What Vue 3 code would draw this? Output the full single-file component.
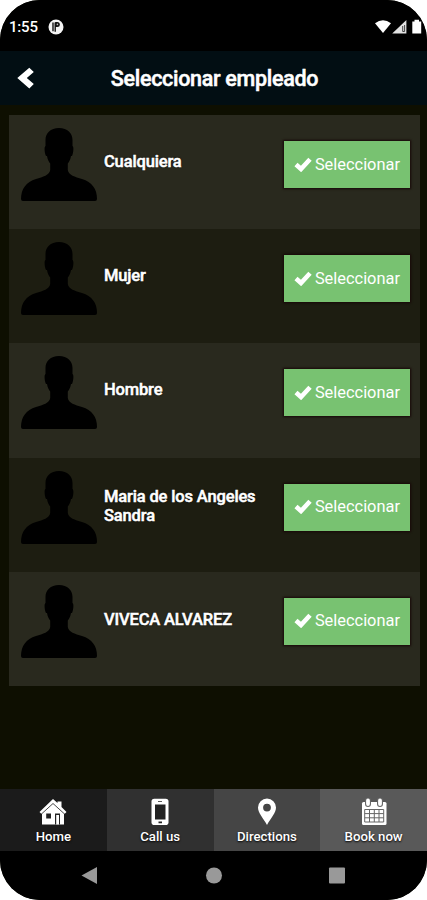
<script setup>
const employees = ['Cualquiera', 'Mujer', 'Hombre', 'Maria de los Angeles Sandra', 'VIVECA ALVAREZ']
const tabs = [
  { id: 'home', label: 'Home' },
  { id: 'call', label: 'Call us' },
  { id: 'directions', label: 'Directions' },
  { id: 'book', label: 'Book now' },
]
</script>

<template>
  <div class="phone">
    <div class="status">
      <span class="clock">1:55</span>
      <svg class="app-dot" viewBox="0 0 16 16">
        <circle cx="8" cy="8" r="7.5" fill="#f4f4f4" />
        <path d="M5 3.6V12.2M7.2 12.8V3.6" fill="none" stroke="#000" stroke-width="1.3" />
        <path d="M7.2 3H9.300A2.500 2.500 0 0 1 9.300 8H7.200Z" fill="#111" />
        <circle cx="9.400" cy="5.400" r=".8" fill="#bbb" />
      </svg>
      <svg class="signals" viewBox="0 0 48 16">
        <path d="M0 4.2Q8 -1.8 16 4.2L8 14Z" fill="#fff" />
        <path d="M17.2 14.6L31.4 1V14.6Z" fill="#e2e2e2" />
        <path d="M27.7 7v5.500H29.600V6" fill="none" stroke="#444" stroke-width="1" />
        <path d="M37.3 2.6H39.5V.8H44V2.6H46.2V14.6H37.3Z" fill="#fff" />
      </svg>
    </div>

    <header class="header">
      <svg class="back" viewBox="0 0 18 22">
        <path d="M0.300 11L12.300 0.800L16.800 5L9.800 11L16.800 17L12.300 21.500Z" fill="#fff" />
      </svg>
      <h1>Seleccionar empleado</h1>
    </header>

    <main class="content">
      <ul class="list">
        <li v-for="name in employees" :key="name" class="row">
          <svg class="avatar" viewBox="0 0 76 73">
            <path d="M38 0C46.500 0 51.500 5 51.500 12V18C53 18.500 52.500 25 51 28H50C49.500 31.500 48 34 46.800 35.500V42C47.500 47 54 49 61 51C71 54 76 61 76 71Q76 73 74 73H2Q0 73 0 71C0 61 5 54 15 51C22 49 28.500 47 29.200 42V35.500C28 34 26.500 31.500 26 28H25C23.500 25 23 18.500 24.500 18V12C24.500 5 29.500 0 38 0Z" fill="#000" />
          </svg>
          <div class="name">{{ name }}</div>
          <button class="select">
            <svg class="check" viewBox="0 0 18 15">
              <path d="M2 7.500L7 12L16 2.300" fill="none" stroke="#fff" stroke-width="4.600" />
            </svg>
            <span>Seleccionar</span>
          </button>
        </li>
      </ul>
    </main>

    <nav class="tabs">
      <a v-for="tab in tabs" :key="tab.id" class="tab" :class="tab.id">
        <svg v-if="tab.id === 'home'" class="icon" viewBox="0 0 28 28">
          <path d="M0.500 14L14 1L18.500 5V3.500H22.500V9L27.500 14L26 15.500H25V26.500H3V15.500H2Z" fill="#fff" />
          <path d="M3 15.500L14 5.500L25 15.500" fill="none" stroke="#333" stroke-width=".9" />
          <path d="M7.200 15.500H12V20.500H7.200ZM16 15.500H21V26.500H16Z" fill="#222" />
          <path d="M17.200 17H20V26.500H17.200Z" fill="#fff" />
        </svg>
        <svg v-else-if="tab.id === 'call'" class="icon" viewBox="0 0 28 28">
          <rect x="5.500" y="0.700" width="17" height="26.300" rx="2.800" fill="#fff" />
          <path d="M9 6.500H19.500V21.500H9ZM12.500 23.500H16V25.200H12.500ZM12 3H16V3.700H12Z" fill="#222" />
        </svg>
        <svg v-else-if="tab.id === 'directions'" class="icon" viewBox="0 0 28 28">
          <path fill-rule="evenodd" d="M14 .6A9 9 0 0 0 5 9.600C5 15 10 20 14 27C18 20 23 15 23 9.600A9 9 0 0 0 14 .6ZM14 5.700A3.900 3.900 0 1 1 14 13.500A3.900 3.900 0 1 1 14 5.700Z" fill="#fff" />
        </svg>
        <svg v-else class="icon" viewBox="0 0 28 28">
          <rect x="2" y="4" width="24.500" height="23" rx="1.500" fill="#fff" />
          <path d="M8 2.500V6M20 2.500V6" stroke="#666" stroke-width="6" stroke-linecap="round" />
          <path d="M8 2.500V6M20 2.500V6" stroke="#fff" stroke-width="3.800" stroke-linecap="round" />
          <path d="M4.700 11.500H23.700V24H4.700ZM4.700 15.600H23.700M4.700 19.800H23.700M9.500 11.500V24M14.300 11.500V24M19 11.500V24" fill="none" stroke="#666" stroke-width="1" />
        </svg>
        <span>{{ tab.label }}</span>
      </a>
    </nav>

    <div class="system">
      <svg viewBox="0 0 427 49">
        <path d="M81.500 24.500L97 16V33Z" fill="#999" />
        <circle cx="214" cy="24.500" r="8" fill="#999" />
        <rect x="329" y="16.500" width="16" height="16" rx="1" fill="#999" />
      </svg>
    </div>
  </div>
</template>

<style>
body {
  background: #fff;
}
</style>

<style scoped>
.phone {
  width: 427px;
  height: 900px;
  display: flex;
  flex-direction: column;
  overflow: hidden;
  border-radius: 40px;
  background: #0e0f01;
  color: #fff;
  font-family: Roboto, sans-serif;
}
.status {
  height: 51px;
  box-sizing: border-box;
  padding: 2px 4px 0 9px;
  display: flex;
  align-items: center;
  background: #000;
}
.clock {
  width: 39px;
  font-size: 15px;
  font-weight: 500;
  letter-spacing: -0.2px;
}
.app-dot {
  width: 16px;
  height: 16px;
}
.signals {
  width: 48px;
  height: 16px;
  margin-left: auto;
}
.header {
  height: 54px;
  display: grid;
  grid-template-columns: 34px 1fr 34px;
  align-items: center;
  background: #020e13;
}
.back {
  width: 18px;
  height: 22px;
  margin-left: 17px;
}
h1 {
  margin: 0 0 0 2px;
  text-align: center;
  font-size: 21.5px;
  font-weight: 500;
  -webkit-text-stroke: 0.5px #fff;
  letter-spacing: -0.3px;
  white-space: nowrap;
}
.content {
  flex: 1;
  padding: 10px 7px 0 9px;
}
.list {
  margin: 0;
  padding: 0;
  list-style: none;
}
.row {
  height: 114.2px;
  box-sizing: border-box;
  padding: 0 10px 0 12px;
  display: flex;
  align-items: flex-start;
  background: #1d1d11;
}
.row:nth-child(odd) {
  background: #29291e;
}
.avatar {
  width: 76px;
  height: 73px;
  margin-top: 13px;
  flex: none;
}
.name {
  flex: 1;
  height: 93px;
  padding: 0 12px 0 7px;
  display: flex;
  align-items: center;
  font-size: 16.5px;
  line-height: 19px;
  font-weight: 500;
  letter-spacing: -0.15px;
  -webkit-text-stroke: 0.5px #fff;
  text-shadow: 0 0 2px #000;
}
.row:nth-child(n + 4) .name {
  height: 96px;
}
.select {
  width: 126px;
  height: 47px;
  margin: 26px 0 0;
  padding: 0 10px 1px;
  box-sizing: border-box;
  flex: none;
  display: flex;
  align-items: center;
  justify-content: space-between;
  border: 0;
  background: #78c271;
  box-shadow: 0 0 2px 1px #180808;
  color: #fff;
  font: 400 16.4px Roboto, sans-serif;
}
.check {
  width: 18px;
  height: 15px;
}
.tabs {
  height: 62px;
  display: grid;
  grid-template-columns: repeat(4, 1fr);
}
.tab {
  display: flex;
  flex-direction: column;
  align-items: center;
  padding-top: 9px;
  font-size: 13.2px;
  line-height: 16px;
  font-weight: 500;
  text-shadow: 0 1px 2px #000;
}
.icon {
  width: 28px;
  height: 28px;
  margin-bottom: 3px;
}
.home { background: #1b1b1b; }
.call { background: #303030; }
.directions { background: #454545; }
.book { background: #595959; }
.system {
  height: 49px;
  background: #000;
}
.system svg {
  display: block;
  width: 427px;
  height: 49px;
}
</style>
